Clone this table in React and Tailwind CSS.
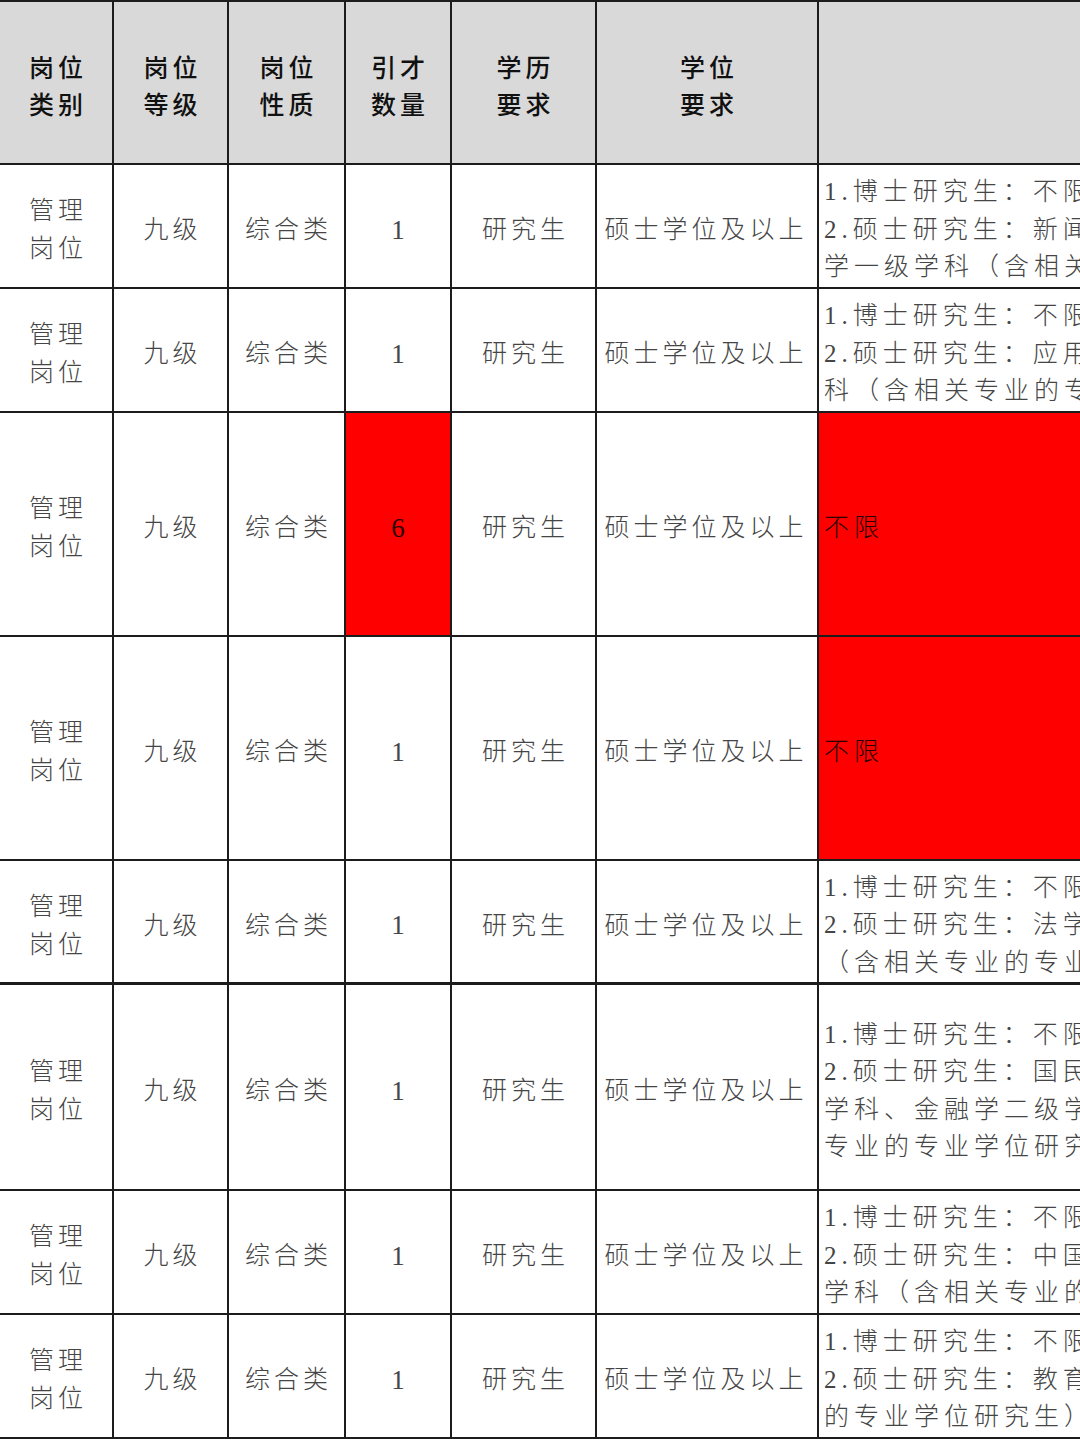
const font = { fontFamily: '"Liberation Serif", "Noto Sans CJK SC", serif' };

const headers = [
  { w: "w-[114px]", lines: ["岗位", "类别"] },
  { w: "w-[115px]", lines: ["岗位", "等级"] },
  { w: "w-[117px]", lines: ["岗位", "性质"] },
  { w: "w-[106px]", lines: ["引才", "数量"] },
  { w: "w-[145px]", lines: ["学历", "要求"] },
  { w: "w-[222px]", lines: ["学位", "要求"] },
];

const rows = [
  {
    h: "h-[124px]",
    req: ["1.博士研究生：不限", "2.硕士研究生：新闻传播学", "学一级学科（含相关专业的专业学位研究生）"],
  },
  {
    h: "h-[124px]",
    req: ["1.博士研究生：不限", "2.硕士研究生：应用经济学", "科（含相关专业的专业学位研究生）"],
  },
  { h: "h-[224px]", count: "6", red: true, redCount: true, req: ["不限"] },
  { h: "h-[224px]", red: true, req: ["不限"] },
  {
    h: "h-[124px]",
    thick: true,
    req: ["1.博士研究生：不限", "2.硕士研究生：法学一级学科", "（含相关专业的专业学位研究生）"],
  },
  {
    h: "h-[206px]",
    req: [
      "1.博士研究生：不限",
      "2.硕士研究生：国民经济学二级",
      "学科、金融学二级学科（含相关",
      "专业的专业学位研究生）",
    ],
  },
  {
    h: "h-[124px]",
    req: ["1.博士研究生：不限", "2.硕士研究生：中国语言文学一级", "学科（含相关专业的专业学位研究生）"],
  },
  {
    h: "h-[124px]",
    req: ["1.博士研究生：不限", "2.硕士研究生：教育学一级学科（含相关专业", "的专业学位研究生）"],
  },
];

function Cell({ w, className = "", children }) {
  return (
    <div className={`${w} shrink-0 h-full border-r-2 border-[#1c1c1c] flex items-center justify-center pt-[8px] ${className}`}>
      {children}
    </div>
  );
}

export default function App() {
  return (
    <div className="w-[1080px] h-[1440px] overflow-hidden bg-white" style={font}>
      <div className="w-[1400px] border-t-2 border-[#1c1c1c]">
        {/* header */}
        <div className="flex h-[163px] border-b-2 border-[#1c1c1c] bg-[#d9d9d9]">
          {headers.map((c, i) => (
            <Cell key={i} w={c.w}>
              <div className="text-[25px] leading-[37px] tracking-[4px] text-[#111] font-medium text-center pl-[4px]">
                {c.lines.map((l) => (
                  <div key={l}>{l}</div>
                ))}
              </div>
            </Cell>
          ))}
          <div className="flex-1" />
        </div>

        {rows.map((r, i) => (
          <div
            key={i}
            className={`flex ${r.h} ${r.thick ? "border-b-[3px]" : "border-b-2"} border-[#1c1c1c] text-[25px] tracking-[4px] text-[#454545] font-light`}
          >
            <Cell w="w-[114px]">
              <div className="leading-[38px] text-center pl-[4px]">
                <div>管理</div>
                <div>岗位</div>
              </div>
            </Cell>
            <Cell w="w-[115px]">
              <span className="pl-[4px]">九级</span>
            </Cell>
            <Cell w="w-[117px]">
              <span className="pl-[4px]">综合类</span>
            </Cell>
            <Cell w="w-[106px]" className={r.redCount ? "bg-[#ff0000] text-[#2a0000]" : ""}>
              <span className="text-[27px] tracking-normal">{r.count || "1"}</span>
            </Cell>
            <Cell w="w-[145px]">
              <span className="pl-[4px]">研究生</span>
            </Cell>
            <Cell w="w-[222px]">
              <span className="whitespace-nowrap pr-[2px]">硕士学位及以上</span>
            </Cell>
            <div
              className={`flex-1 h-full flex flex-col justify-center pl-[5px] pt-[7px] leading-[37.5px] tracking-[5px] ${
                r.red ? "bg-[#ff0000] text-[#2a0000]" : ""
              }`}
            >
              {r.req.map((l, j) => (
                <div key={j} className="whitespace-nowrap">
                  {l}
                </div>
              ))}
            </div>
          </div>
        ))}
      </div>
    </div>
  );
}
